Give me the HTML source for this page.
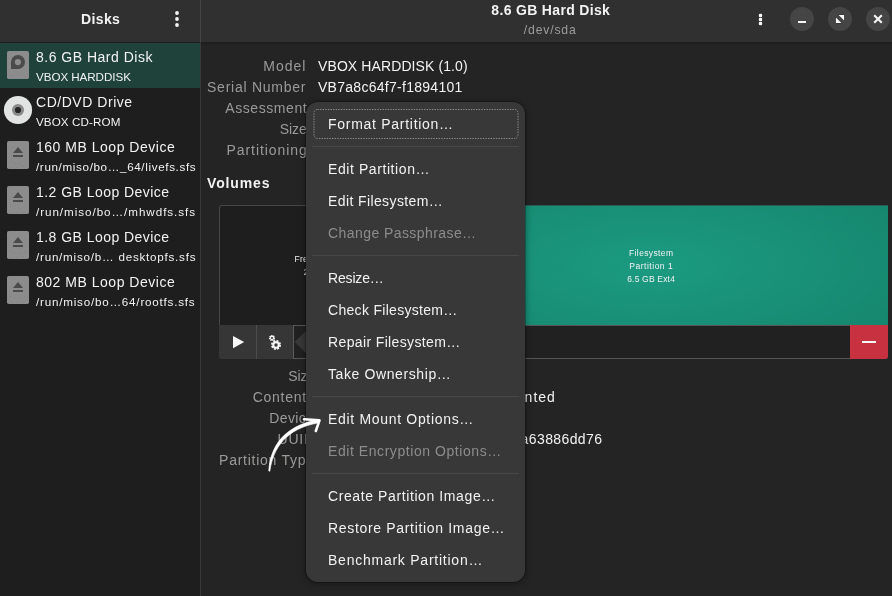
<!DOCTYPE html>
<html lang="en">
<head>
<meta charset="utf-8">
<title>Disks</title>
<style>
*{box-sizing:border-box;margin:0;padding:0}
html,body{width:892px;height:596px;overflow:hidden;background:#242424}
body{font-family:"Liberation Sans",sans-serif;font-size:14.67px;color:#f2f2f2;position:relative}
.abs{position:absolute}
.t{position:absolute;white-space:pre;line-height:1}
#hdrL{left:0;top:0;width:200px;height:42px;background:#303030}
#hdrR{left:201px;top:0;width:691px;height:42px;background:#303030}
#hline{left:0;top:42px;width:892px;height:3px;background:linear-gradient(#1c1c1c 0,#1c1c1c 33%,rgba(0,0,0,.12) 34%,rgba(0,0,0,0) 100%)}
#vline{left:200px;top:0;width:1px;height:596px;background:#383838}
#vlineH{left:200px;top:0;width:1px;height:42px;background:#444}
#side{left:0;top:43px;width:200px;height:553px;background:#1e1e1e}
.row{position:absolute;left:0;width:200px;height:45px}
.row.sel{background:#1f423b}
.row svg{position:absolute;left:4px;top:6px}
#pop{left:306px;top:102px;width:219px;height:480px;background:#383838;border-radius:12px;box-shadow:0 0 0 1px rgba(0,0,0,.22),0 1px 6px 1px rgba(0,0,0,.34)}
.sep{position:absolute;left:312px;width:207px;height:1px;background:#484848}
</style>
</head>
<body><div id="root" style="position:absolute;left:0;top:0;width:892px;height:596px;will-change:transform">
<div class="abs" id="side"></div>
<div class="abs" id="hdrL"></div>
<div class="abs" id="hdrR"></div>
<div class="abs" id="hline"></div>
<div class="abs" id="vline"></div>
<div class="abs" id="vlineH"></div>

<!-- sidebar header menu button -->
<svg class="abs" style="left:170px;top:8px" width="14" height="22" viewBox="0 0 14 22"><circle cx="7" cy="5" r="1.900" fill="#f4f4f4"/><circle cx="7" cy="11" r="1.900" fill="#f4f4f4"/><circle cx="7" cy="17" r="1.900" fill="#f4f4f4"/></svg>

<!-- sidebar rows (icons) -->
<div class="row sel" style="top:43px">
  <svg width="28" height="32" viewBox="0 0 28 32"><rect x="3" y="2" width="22" height="28" rx="1.8" fill="#8c8c8c"/><path d="M7 13 A7 7 0 1 1 14 20 H7 Z" fill="#4b4b4b"/><circle cx="13.900" cy="13.100" r="3.100" fill="#8c8c8c"/><g fill="#7e7e7e"><circle cx="8.500" cy="26.500" r=".5"/><circle cx="13.500" cy="26.500" r=".5"/><circle cx="17.500" cy="25.500" r=".5"/><circle cx="21.500" cy="27.500" r=".5"/></g></svg>
</div>
<div class="row" style="top:88px">
  <svg width="30" height="34" viewBox="0 0 30 34" style="left:3px;top:5px"><circle cx="15" cy="17" r="14.100" fill="#e2e3e3"/><circle cx="15" cy="17" r="6" fill="#8a8a8a"/><circle cx="15" cy="17" r="3.100" fill="#252525"/></svg>
</div>
<div class="row" style="top:133px"><svg width="28" height="32" viewBox="0 0 28 32"><rect x="3" y="2" width="22" height="28" rx="1.8" fill="#8c8c8c"/><path d="M14 8 L19 14 H9 Z" fill="#4a4a4a"/><rect x="9" y="16" width="10" height="2" fill="#4a4a4a"/><g fill="#7e7e7e"><circle cx="6.500" cy="22.500" r=".5"/><circle cx="10.500" cy="24.500" r=".5"/><circle cx="15.500" cy="24.500" r=".5"/><circle cx="20.500" cy="22.500" r=".5"/><circle cx="7.500" cy="28.500" r=".5"/><circle cx="12.500" cy="28.500" r=".5"/><circle cx="18.500" cy="27.500" r=".5"/></g></svg></div>
<div class="row" style="top:178px"><svg width="28" height="32" viewBox="0 0 28 32"><rect x="3" y="2" width="22" height="28" rx="1.8" fill="#8c8c8c"/><path d="M14 8 L19 14 H9 Z" fill="#4a4a4a"/><rect x="9" y="16" width="10" height="2" fill="#4a4a4a"/><g fill="#7e7e7e"><circle cx="6.500" cy="22.500" r=".5"/><circle cx="10.500" cy="24.500" r=".5"/><circle cx="15.500" cy="24.500" r=".5"/><circle cx="20.500" cy="22.500" r=".5"/><circle cx="7.500" cy="28.500" r=".5"/><circle cx="12.500" cy="28.500" r=".5"/><circle cx="18.500" cy="27.500" r=".5"/></g></svg></div>
<div class="row" style="top:223px"><svg width="28" height="32" viewBox="0 0 28 32"><rect x="3" y="2" width="22" height="28" rx="1.8" fill="#8c8c8c"/><path d="M14 8 L19 14 H9 Z" fill="#4a4a4a"/><rect x="9" y="16" width="10" height="2" fill="#4a4a4a"/><g fill="#7e7e7e"><circle cx="6.500" cy="22.500" r=".5"/><circle cx="10.500" cy="24.500" r=".5"/><circle cx="15.500" cy="24.500" r=".5"/><circle cx="20.500" cy="22.500" r=".5"/><circle cx="7.500" cy="28.500" r=".5"/><circle cx="12.500" cy="28.500" r=".5"/><circle cx="18.500" cy="27.500" r=".5"/></g></svg></div>
<div class="row" style="top:268px"><svg width="28" height="32" viewBox="0 0 28 32"><rect x="3" y="2" width="22" height="28" rx="1.8" fill="#8c8c8c"/><path d="M14 8 L19 14 H9 Z" fill="#4a4a4a"/><rect x="9" y="16" width="10" height="2" fill="#4a4a4a"/><g fill="#7e7e7e"><circle cx="6.500" cy="22.500" r=".5"/><circle cx="10.500" cy="24.500" r=".5"/><circle cx="15.500" cy="24.500" r=".5"/><circle cx="20.500" cy="22.500" r=".5"/><circle cx="7.500" cy="28.500" r=".5"/><circle cx="12.500" cy="28.500" r=".5"/><circle cx="18.500" cy="27.500" r=".5"/></g></svg></div>

<!-- main header buttons -->
<svg class="abs" style="left:754px;top:8px" width="12" height="22" viewBox="0 0 12 22"><g fill="#f6f6f6" stroke="#262626" stroke-width=".8" paint-order="stroke"><rect x="4.800" y="5.800" width="3.400" height="3.400" rx="1.300"/><rect x="4.800" y="9.800" width="3.400" height="3.400" rx="1.300"/><rect x="4.800" y="13.800" width="3.400" height="3.400" rx="1.300"/></g></svg>
<svg class="abs" style="left:790px;top:7px" width="100" height="24" viewBox="0 0 100 24">
  <circle cx="12" cy="12" r="12" fill="#454545"/><circle cx="50" cy="12" r="12" fill="#454545"/><circle cx="88" cy="12" r="12" fill="#454545"/>
  <rect x="8" y="14" width="8" height="2" fill="#f6f6f6"/>
  <path d="M48.600 7.900 H54.100 V13.400 Z M45.900 10.600 V16.100 H51.400 Z" fill="#f8f8f8" stroke="#2c2c2c" stroke-width=".7" paint-order="stroke"/>
  <path d="M84.200 8.200 L91.800 15.800 M91.800 8.200 L84.200 15.800" stroke="#f6f6f6" stroke-width="2.100" fill="none"/>
</svg>

<!-- volumes -->
<div class="abs" style="left:219px;top:205px;width:199px;height:120px;background:#1e1e1e;border:1px solid #464646;border-bottom:none;border-radius:3px 0 0 0"></div>
<div class="abs" style="left:417px;top:205px;width:471px;height:120px;border-top:1px solid #2f5a50;background:radial-gradient(ellipse 60% 85% at 50% 50%,#1b9b81 0%,#16876f 100%)"></div>
<!-- toolbar -->
<div class="abs" style="left:219px;top:325px;width:669px;height:34px;background:#212121;border:1px solid #555;border-radius:0 0 3px 3px"></div>
<div class="abs" style="left:219px;top:325px;width:37px;height:34px;background:#363636;border-radius:0 0 0 3px"></div>
<div class="abs" style="left:257px;top:325px;width:36px;height:34px;background:#363636"></div>
<div class="abs" style="left:256px;top:325px;width:1px;height:34px;background:#4c4c4c"></div>
<div class="abs" style="left:293px;top:325px;width:1px;height:34px;background:#5a5a5a"></div>
<svg class="abs" style="left:231px;top:335px" width="14" height="15" viewBox="0 0 14 15"><path d="M2 1 L13.200 7 L2 13.200 Z" fill="#f6f6f6"/></svg>
<svg class="abs" style="left:266px;top:333px" width="18" height="18" viewBox="0 0 18 18"><g fill="none" stroke="#f6f6f6"><circle cx="6" cy="5" r="2.300" stroke-width="1.500" stroke-dasharray="1.2 0.606"/><circle cx="6" cy="5" r="1.600" stroke-width="1.100"/><circle cx="10" cy="12" r="3.900" stroke-width="2.200" stroke-dasharray="1.9 1.163"/><circle cx="10" cy="12" r="2.700" stroke-width="2"/></g></svg>
<div class="abs" style="left:850px;top:325px;width:38px;height:34px;background:#c8313f;border-radius:0 0 3px 0"></div>
<div class="abs" style="left:862px;top:341px;width:14px;height:2px;background:#f6f6f6"></div>

<div class="t" style="left:80.91px;top:12px;font-size:14.01px;letter-spacing:0.406px;color:#f2f2f2;font-weight:bold">Disks</div>
<div class="t" style="left:36.00px;top:50px;font-size:14.01px;letter-spacing:0.498px;color:#f2f2f2">8.6 GB Hard Disk</div>
<div class="t" style="left:36.00px;top:71px;font-size:11.65px;letter-spacing:-0.069px;color:#f2f2f2">VBOX HARDDISK</div>
<div class="t" style="left:36.00px;top:95px;font-size:14.01px;letter-spacing:0.536px;color:#f2f2f2">CD/DVD Drive</div>
<div class="t" style="left:36.00px;top:116px;font-size:11.65px;letter-spacing:0.097px;color:#f2f2f2">VBOX CD-ROM</div>
<div class="t" style="left:36.00px;top:140px;font-size:14.01px;letter-spacing:0.513px;color:#f2f2f2">160 MB Loop Device</div>
<div class="t" style="left:36.00px;top:161px;font-size:11.65px;letter-spacing:0.640px;color:#f2f2f2">/run/miso/bo…_64/livefs.sfs</div>
<div class="t" style="left:36.00px;top:185px;font-size:14.01px;letter-spacing:0.458px;color:#f2f2f2">1.2 GB Loop Device</div>
<div class="t" style="left:36.00px;top:206px;font-size:11.65px;letter-spacing:0.953px;color:#f2f2f2">/run/miso/bo…/mhwdfs.sfs</div>
<div class="t" style="left:36.00px;top:230px;font-size:14.01px;letter-spacing:0.458px;color:#f2f2f2">1.8 GB Loop Device</div>
<div class="t" style="left:36.00px;top:251px;font-size:11.65px;letter-spacing:0.765px;color:#f2f2f2">/run/miso/b… desktopfs.sfs</div>
<div class="t" style="left:36.00px;top:275px;font-size:14.01px;letter-spacing:0.513px;color:#f2f2f2">802 MB Loop Device</div>
<div class="t" style="left:36.00px;top:296px;font-size:11.65px;letter-spacing:0.782px;color:#f2f2f2">/run/miso/bo…64/rootfs.sfs</div>
<div class="t" style="left:491.37px;top:3px;font-size:14.01px;letter-spacing:0.324px;color:#f2f2f2;font-weight:bold">8.6 GB Hard Disk</div>
<div class="t" style="left:523.87px;top:24px;font-size:12.22px;letter-spacing:0.809px;color:#9c9c9c">/dev/sda</div>
<div class="t" style="left:263.28px;top:59px;font-size:14.01px;letter-spacing:1.019px;color:#9a9a99">Model</div>
<div class="t" style="left:318.00px;top:59px;font-size:14.01px;letter-spacing:0.103px;color:#f2f2f2">VBOX HARDDISK (1.0)</div>
<div class="t" style="left:207.04px;top:80px;font-size:14.01px;letter-spacing:0.748px;color:#9a9a99">Serial Number</div>
<div class="t" style="left:318.00px;top:80px;font-size:14.01px;letter-spacing:0.275px;color:#f2f2f2">VB7a8c64f7-f1894101</div>
<div class="t" style="left:225.23px;top:101px;font-size:14.01px;letter-spacing:0.580px;color:#9a9a99">Assessment</div>
<div class="t" style="left:279.65px;top:122px;font-size:14.01px;letter-spacing:-0.062px;color:#9a9a99">Size</div>
<div class="t" style="left:226.54px;top:143px;font-size:14.01px;letter-spacing:0.919px;color:#9a9a99">Partitioning</div>
<div class="t" style="left:207.00px;top:176px;font-size:14.01px;letter-spacing:0.875px;color:#f2f2f2;font-weight:bold">Volumes</div>
<div class="t" style="left:288.15px;top:369px;font-size:14.01px;letter-spacing:-0.062px;color:#9a9a99">Size</div>
<div class="t" style="left:252.63px;top:390px;font-size:14.01px;letter-spacing:0.760px;color:#9a9a99">Contents</div>
<div class="t" style="left:269.20px;top:411px;font-size:14.01px;letter-spacing:0.401px;color:#9a9a99">Device</div>
<div class="t" style="left:277.61px;top:432px;font-size:14.01px;letter-spacing:0.719px;color:#9a9a99">UUID</div>
<div class="t" style="left:219.09px;top:453px;font-size:14.01px;letter-spacing:0.734px;color:#9a9a99">Partition Type</div>
<div class="t" style="left:322.42px;top:390px;font-size:14.01px;color:#f2f2f2"><span style="letter-spacing:0.635px">Ext4 (version 1.0) — Not Mou</span><span style="letter-spacing:1.018px">nted</span></div>
<div class="t" style="left:319.96px;top:432px;font-size:14.01px;color:#f2f2f2"><span style="letter-spacing:0.622px">8f2c41d7-5b3e-4a19-9c60-12</span><span style="letter-spacing:0.388px">a63886dd76</span></div>
<div class="t" style="left:294.61px;top:255px;font-size:8.50px;letter-spacing:0.166px;color:#f2f2f2">Free Space</div>
<div class="t" style="left:303.68px;top:268px;font-size:8.50px;letter-spacing:0.164px;color:#f2f2f2">2.1 GB</div>
<div class="t" style="left:629.06px;top:249px;font-size:8.50px;letter-spacing:0.371px;color:#f2f2f2">Filesystem</div>
<div class="t" style="left:629.37px;top:262px;font-size:8.50px;letter-spacing:0.506px;color:#f2f2f2">Partition 1</div>
<div class="t" style="left:627.16px;top:275px;font-size:8.50px;letter-spacing:0.192px;color:#f2f2f2">6.5 GB Ext4</div>

<!-- popover -->
<svg class="abs" style="left:293px;top:330px" width="14" height="24" viewBox="0 0 14 24"><path d="M14 0 L1.500 12 L14 24 Z" fill="#383838"/></svg>
<div class="abs" id="pop"></div>
<svg class="abs" style="left:313px;top:108px" width="207" height="32" viewBox="0 0 207 32"><rect x="1" y="1.500" width="204" height="29" rx="3.500" fill="none" stroke="#8c8c8c" stroke-width="1" stroke-dasharray="1.400 1.200"/></svg>
<div class="sep" style="top:146px"></div>
<div class="sep" style="top:255px"></div>
<div class="sep" style="top:396px"></div>
<div class="sep" style="top:473px"></div>
<div class="t" style="left:328.00px;top:117px;font-size:14.01px;letter-spacing:0.721px;color:#f2f2f2">Format Partition…</div>
<div class="t" style="left:328.00px;top:162px;font-size:14.01px;letter-spacing:0.580px;color:#f2f2f2">Edit Partition…</div>
<div class="t" style="left:328.00px;top:194px;font-size:14.01px;letter-spacing:0.394px;color:#f2f2f2">Edit Filesystem…</div>
<div class="t" style="left:328.00px;top:226px;font-size:14.01px;letter-spacing:0.425px;color:#8c8c8c">Change Passphrase…</div>
<div class="t" style="left:328.00px;top:271px;font-size:14.01px;letter-spacing:-0.171px;color:#f2f2f2">Resize…</div>
<div class="t" style="left:328.00px;top:303px;font-size:14.01px;letter-spacing:0.303px;color:#f2f2f2">Check Filesystem…</div>
<div class="t" style="left:328.00px;top:335px;font-size:14.01px;letter-spacing:0.368px;color:#f2f2f2">Repair Filesystem…</div>
<div class="t" style="left:328.00px;top:367px;font-size:14.01px;letter-spacing:0.600px;color:#f2f2f2">Take Ownership…</div>
<div class="t" style="left:328.00px;top:412px;font-size:14.01px;letter-spacing:0.683px;color:#f2f2f2">Edit Mount Options…</div>
<div class="t" style="left:328.00px;top:444px;font-size:14.01px;letter-spacing:0.563px;color:#8c8c8c">Edit Encryption Options…</div>
<div class="t" style="left:328.00px;top:489px;font-size:14.01px;letter-spacing:0.600px;color:#f2f2f2">Create Partition Image…</div>
<div class="t" style="left:328.00px;top:521px;font-size:14.01px;letter-spacing:0.675px;color:#f2f2f2">Restore Partition Image…</div>
<div class="t" style="left:328.00px;top:553px;font-size:14.01px;letter-spacing:0.758px;color:#f2f2f2">Benchmark Partition…</div>

<!-- hand-drawn arrow -->
<svg class="abs" style="left:260px;top:410px" width="70" height="70" viewBox="260 410 70 70">
  <path d="M268.800 471 C270.300 447.500 283 426 318 419.800 L318.600 422.800 C285.500 428.600 273 448.500 269.800 471.200 Z" fill="#ffffff" stroke="#fff" stroke-width="0.7" stroke-linejoin="round"/>
  <path d="M304 419.300 L319.500 420.300 L315.800 431" fill="none" stroke="#ffffff" stroke-width="2.600" stroke-linecap="round" stroke-linejoin="round"/>
</svg>
</div></body>
</html>
